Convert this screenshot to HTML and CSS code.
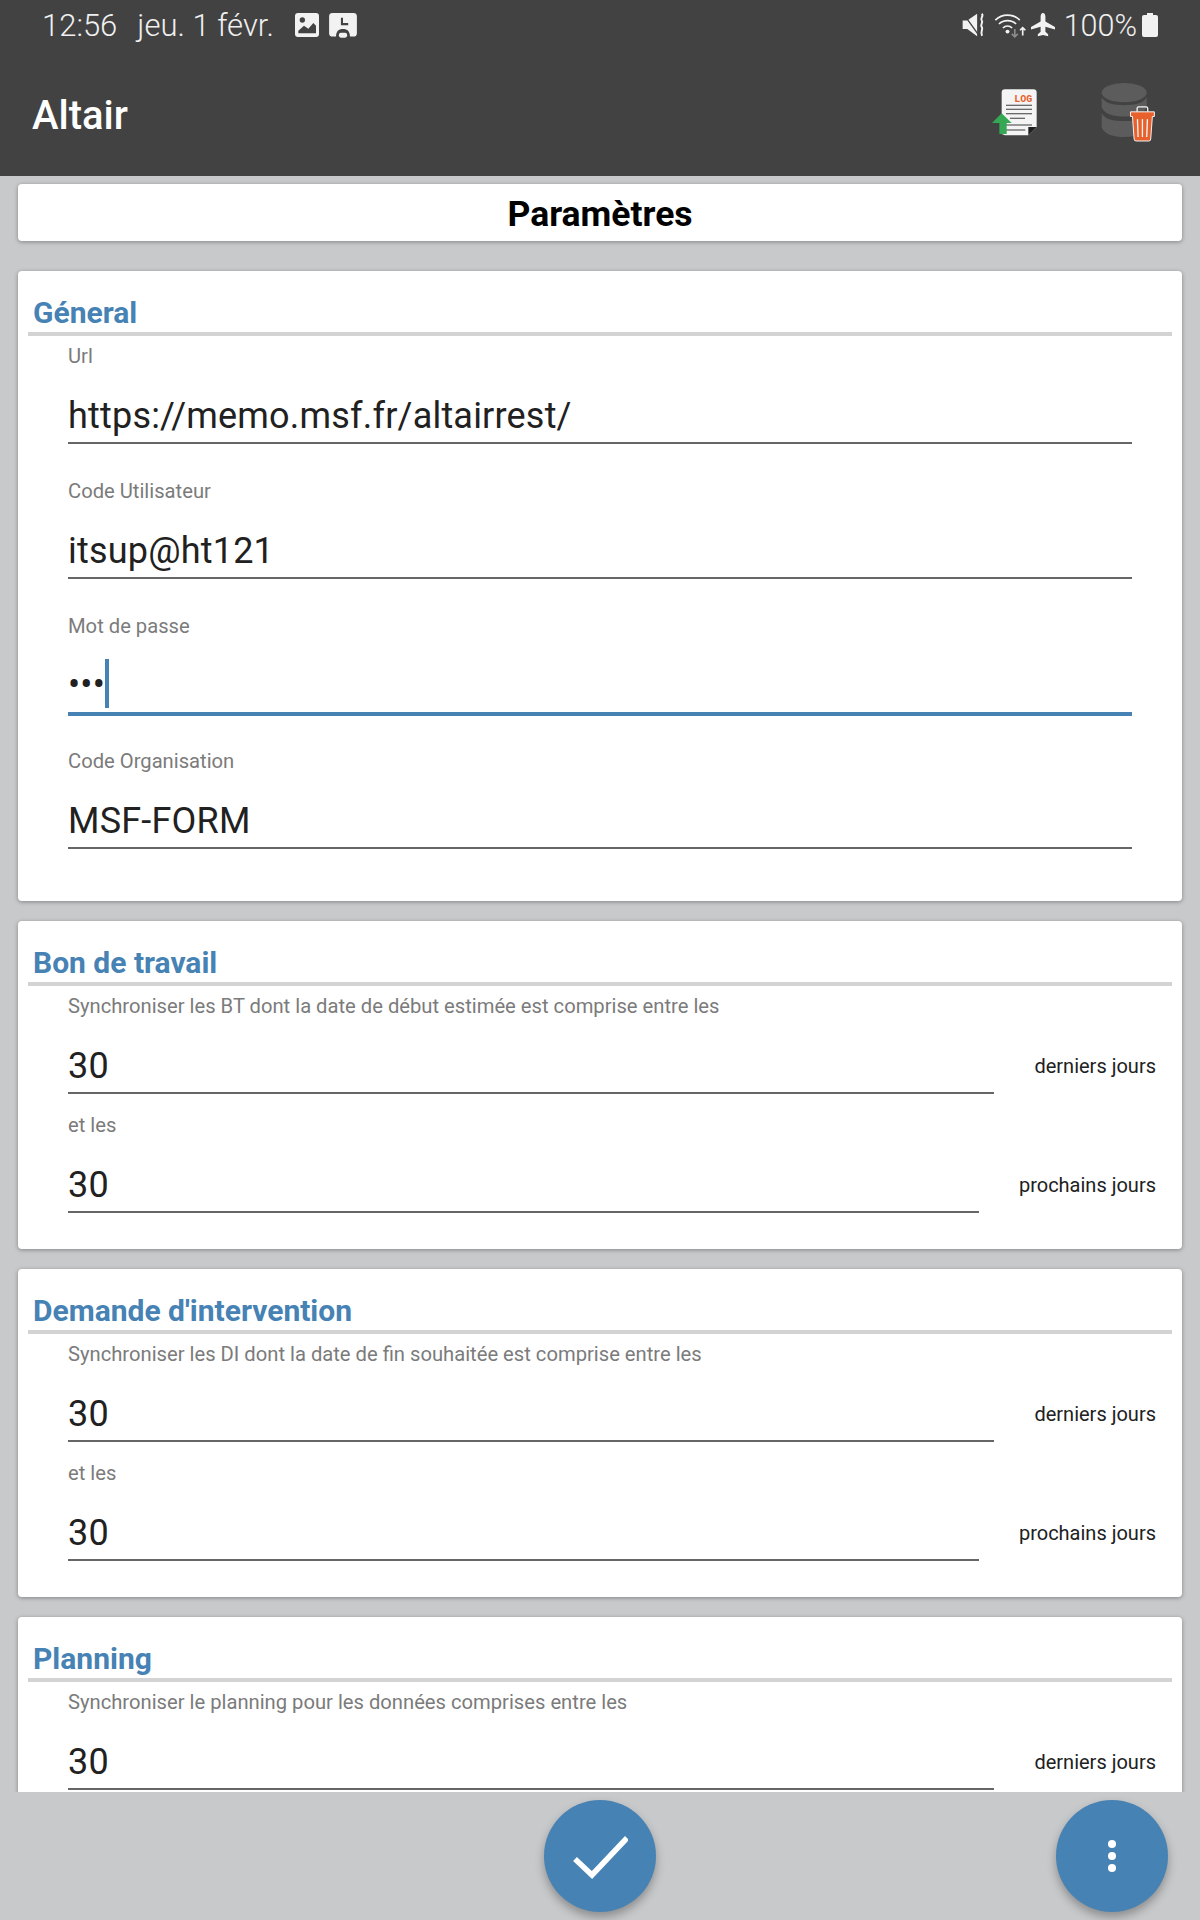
FILE: index.html
```html
<!DOCTYPE html>
<html lang="fr">
<head>
<meta charset="utf-8">
<title>Altair</title>
<link rel="stylesheet" href="styles.css">
</head>
<body>
<div class="app">
  <header class="appbar">
    <div class="status">
      <div class="status-left">
        <span class="time">12:56</span>
        <span class="date">jeu. 1 févr.</span>
        <svg class="st-img" viewBox="33 22 72 72"><rect x="33" y="22" width="72" height="72" rx="9" fill="#f2f2f2"/><circle cx="55" cy="43" r="8" fill="#424242"/><path d="M43 83v-8l17-15 13 9 15-17 8 8v23z" fill="#424242"/></svg>
        <svg class="st-shot" viewBox="137 22 80 72"><path d="M147 22h60a10 10 0 0 1 10 10v48a10 10 0 0 1-10 10h-10c0-15-7-22-20-22s-20 7-20 22h-10a10 10 0 0 1-10-10V32a10 10 0 0 1 10-10z" fill="#f2f2f2"/><path d="M174 36v18h18" fill="none" stroke="#424242" stroke-width="6"/><rect x="165" y="79" width="24" height="14" rx="6" fill="#f2f2f2"/></svg>
      </div>
      <div class="status-right">
        <svg class="st-mute" viewBox="24 22 70 72"><path d="M26 44h14l30-20v68L40 70H26z" fill="#f2f2f2"/><path d="M24 18l52 72" stroke="#424242" stroke-width="4"/><path d="M84 24c8 7-6 13 0 20s-6 13 0 20-6 14 1 27" fill="none" stroke="#f2f2f2" stroke-width="6"/></svg>
        <svg class="st-wifi" viewBox="120 20 100 75"><g fill="none" stroke="#f2f2f2" stroke-width="5"><path d="M124 41c20-20 54-20 74 0"/><path d="M135 53c14-14 38-14 52 0"/><path d="M147 65c8-8 20-8 28 0"/></g><circle cx="161" cy="76" r="6" fill="#f2f2f2"/><path d="M183 68v24M174 83l9 9 9-9" fill="none" stroke="#8c8c8c" stroke-width="5"/><path d="M207 88V64M199 72l8-8 8 8" fill="none" stroke="#f2f2f2" stroke-width="5"/></svg>
        <svg class="st-plane" viewBox="232 24 70 70"><path d="M267 24c5 0 7 6 7 11v14l28 16v7l-28-8v15l8 7v6l-15-4-15 4v-6l8-7V64l-28 8v-7l28-16V35c0-5 2-11 7-11z" fill="#f2f2f2"/></svg>
        <span class="pct">100%</span>
        <svg class="st-batt" viewBox="0 0 16 24"><path d="M5 0h6v2h3a2 2 0 0 1 2 2v18a2 2 0 0 1-2 2H2a2 2 0 0 1-2-2V4a2 2 0 0 1 2-2h3z" fill="#f2f2f2"/></svg>
      </div>
    </div>
    <div class="toolbar">
      <span class="app-title">Altair</span>
      <div class="actions">
        <svg class="ic-log" viewBox="270 260 150 150">
          <path d="M315 267h85a10 10 0 0 1 10 10v103l-25 25h-70l-10-4V277a10 10 0 0 1 10-10z" fill="#f4f4f4"/>
          <path d="M385 405l25-25h-25z" fill="#1f1f1f"/>
          <text class="log-word" x="343" y="304">LOG</text>
          <g fill="#6a6a6a"><rect x="318" y="313" width="78" height="4"/><rect x="318" y="325" width="78" height="4"/><rect x="318" y="338" width="78" height="4"/><rect x="330" y="352" width="45" height="4"/><rect x="318" y="372" width="78" height="4"/><rect x="318" y="387" width="58" height="4"/></g>
          <path d="M305 339l30 29h-15v33h-22v-33h-22z" fill="#34a853"/>
        </svg>
        <svg class="ic-db" viewBox="600 240 175 190">
          <g fill="#5c5c5c"><ellipse cx="673" cy="278" rx="68" ry="29"/><path d="M605 292c10 18 35 24 68 24s58-6 68-24v30c-10 22-35 28-68 28s-58-6-68-28z"/><path d="M605 340c10 18 35 24 68 24 10 0 20-1 30-2v48c-10 1-20 2-30 2-33 0-58-8-68-28z"/></g>
          <path d="M692 336h72v14h-6l-5 68a6 6 0 0 1-6 6h-38a6 6 0 0 1-6-6l-5-68h-6z" fill="#e8612c" stroke="#f4f4f4" stroke-width="3"/>
          <path d="M712 336v-10a5 5 0 0 1 5-5h22a5 5 0 0 1 5 5v10" fill="none" stroke="#f4f4f4" stroke-width="4"/>
          <g stroke="#f4f4f4" stroke-width="4"><path d="M713 358l2 54"/><path d="M728 358v54"/><path d="M743 358l-2 54"/></g>
        </svg>
      </div>
    </div>
  </header>

  <main class="content">
    <div class="card page-title">Paramètres</div>

    <section class="card section">
      <h2 class="section-title">Géneral</h2>
      <div class="field wide">
        <div class="label">Url</div>
        <div class="input">https://memo.msf.fr/altairrest/</div>
      </div>
      <div class="field wide">
        <div class="label">Code Utilisateur</div>
        <div class="input">itsup@ht121</div>
      </div>
      <div class="field wide">
        <div class="label">Mot de passe</div>
        <div class="input focused"><span class="dots">•••</span><span class="caret"></span></div>
      </div>
      <div class="field wide">
        <div class="label">Code Organisation</div>
        <div class="input">MSF-FORM</div>
      </div>
    </section>

    <section class="card section">
      <h2 class="section-title">Bon de travail</h2>
      <div class="field tight">
        <div class="label">Synchroniser les BT dont la date de début estimée est comprise entre les</div>
        <div class="row"><div class="input">30</div><span class="suffix">derniers jours</span></div>
      </div>
      <div class="field tight">
        <div class="label">et les</div>
        <div class="row"><div class="input">30</div><span class="suffix">prochains jours</span></div>
      </div>
    </section>

    <section class="card section">
      <h2 class="section-title">Demande d'intervention</h2>
      <div class="field tight">
        <div class="label">Synchroniser les DI dont la date de fin souhaitée est comprise entre les</div>
        <div class="row"><div class="input">30</div><span class="suffix">derniers jours</span></div>
      </div>
      <div class="field tight">
        <div class="label">et les</div>
        <div class="row"><div class="input">30</div><span class="suffix">prochains jours</span></div>
      </div>
    </section>

    <section class="card section">
      <h2 class="section-title">Planning</h2>
      <div class="field tight">
        <div class="label">Synchroniser le planning pour les données comprises entre les</div>
        <div class="row"><div class="input">30</div><span class="suffix">derniers jours</span></div>
      </div>
    </section>
  </main>

  <footer class="footer">
    <span></span>
    <button class="fab" type="button" aria-label="Valider">
      <svg class="fab-icon" viewBox="0 0 56 56"><path d="M3 31l17 16L55 10" fill="none" stroke="#fff" stroke-width="5.500"/></svg>
    </button>
    <button class="fab fab-end" type="button" aria-label="Menu">
      <svg class="fab-dots" viewBox="0 0 10 34"><circle cx="5" cy="5" r="4" fill="#fff"/><circle cx="5" cy="17" r="4" fill="#fff"/><circle cx="5" cy="29" r="4" fill="#fff"/></svg>
    </button>
  </footer>
</div>
</body>
</html>
```

FILE: styles.css
```css
* { box-sizing: border-box; }
html, body { margin: 0; padding: 0; }
body { font-family: Roboto, "Liberation Sans", sans-serif; background: #c8c9cb; }

.app { width: 1200px; height: 1920px; display: flex; flex-direction: column; overflow: hidden; }

.appbar { height: 176px; flex: none; background: #424242; color: #fff; display: flex; flex-direction: column; }

.status { height: 50px; display: flex; align-items: center; justify-content: space-between; padding: 0 42px; color: #f0f0f0; font-size: 31px; font-weight: 300; }
.status-left, .status-right { display: flex; align-items: center; }
.date { margin-left: 20px; }
.st-img { width: 24px; height: 24px; margin-left: 21px; }
.st-shot { width: 28px; height: 25px; margin-left: 10px; }
.st-mute { width: 23px; height: 24px; }
.st-wifi { width: 33px; height: 25px; margin-left: 9px; }
.st-plane { width: 24px; height: 24px; margin-left: 4px; }
.pct { margin-left: 9px; font-size: 30.5px; }
.st-batt { width: 16px; height: 24px; margin-left: 5px; }

.toolbar { flex: 1; display: flex; align-items: center; justify-content: space-between; padding: 4px 42px 0 32px; }
.app-title { font-size: 40px; font-weight: 500; }
.actions { display: flex; align-items: center; gap: 60px; margin-top: -7px; }
.ic-log { width: 50px; height: 50px; }
.ic-db { width: 58px; height: 63px; }
.log-word { font-family: "Liberation Mono", monospace; font-size: 30px; font-weight: 700; fill: #e8612c; }

.content { flex: 1; min-height: 0; overflow: hidden; padding: 8px 18px 0; display: flex; flex-direction: column; gap: 20px; }

.card { flex: none; background: #fff; border-radius: 4px; box-shadow: 0 1px 4px rgba(0, 0, 0, .35); }

.page-title { height: 57px; margin-bottom: 10px; padding-top: 2px; display: flex; align-items: center; justify-content: center; font-size: 35.5px; font-weight: 700; color: #000; }

.section { padding: 0 10px 25px; }
.section-title { height: 65px; margin: 0; padding: 0 0 0 5px; display: flex; align-items: flex-end; border-bottom: 4px solid #d3d3d3; color: #4682b4; font-size: 30px; font-weight: 700; line-height: 38px; }

.field { padding: 8px 0 0 40px; }
.field.wide { padding-right: 40px; margin-bottom: 27px; }
.field.tight { padding-right: 16px; margin-bottom: 11px; }

.label { height: 25px; line-height: 24px; font-size: 20.2px; color: #7b7b7b; }

.input { height: 75px; flex: 1; display: flex; align-items: flex-end; padding-bottom: 2px; border-bottom: 2px solid #666; color: #212121; font-size: 36px; letter-spacing: .2px; line-height: 48px; }
.input.focused { border-bottom-color: #4682b4; box-shadow: 0 2px 0 #4682b4; }
.dots { line-height: 49px; }
.caret { width: 4px; height: 49px; margin-left: 0; margin-bottom: 2px; background: #4682b4; }

.row { display: flex; align-items: center; gap: 40px; }
.suffix { font-size: 20px; color: #212121; margin-top: 18px; }

.footer { height: 128px; flex: none; padding-top: 8px; display: grid; grid-template-columns: 1fr auto 1fr; align-items: start; }
.fab { width: 112px; height: 112px; padding: 0; border: 0; border-radius: 50%; background: #4682b4; box-shadow: 0 5px 10px rgba(0, 0, 0, .3); display: flex; align-items: center; justify-content: center; }
.fab-end { justify-self: end; margin-right: 32px; }
.fab-icon { width: 56px; height: 56px; }
.fab-dots { width: 10px; height: 34px; }
```
